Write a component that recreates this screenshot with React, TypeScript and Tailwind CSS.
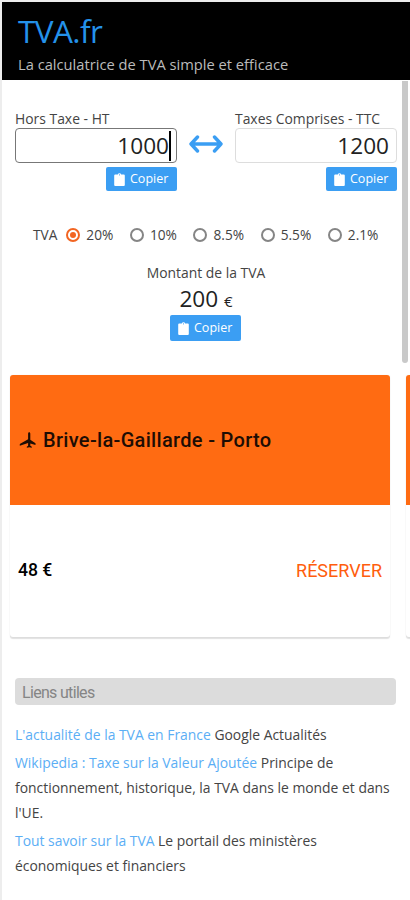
import React from 'react'

type LinkItem = {
  label: string
  description: string
}

const rates = ['20%', '10%', '8.5%', '5.5%', '2.1%']

const links: LinkItem[] = [
  { label: "L'actualité de la TVA en France", description: 'Google Actualités' },
  {
    label: 'Wikipedia : Taxe sur la Valeur Ajoutée',
    description: "Principe de fonctionnement, historique, la TVA dans le monde et dans l'UE.",
  },
  {
    label: 'Tout savoir sur la TVA',
    description: 'Le portail des ministères économiques et financiers',
  },
]

const CopyButton: React.FC<{ className?: string }> = ({ className = '' }) => (
  <button
    className={`flex w-[71px] items-center rounded-[2px] bg-[#3b9ef3] pl-2 text-[12.5px] text-white ${className}`}
  >
    <svg width="11" height="13" viewBox="0 0 11 13" fill="currentColor" className="mr-[5px] shrink-0">
      <path
        fillRule="evenodd"
        d="M1.2 1.5H3.8A1.75 1.75 0 0 1 7.2 1.5H9.8A1 1 0 0 1 10.8 2.5V12A1 1 0 0 1 9.8 13H1.2A1 1 0 0 1 .2 12V2.5A1 1 0 0 1 1.2 1.5ZM5.5 1.2A.6.6 0 1 0 5.5 2.4A.6.6 0 1 0 5.5 1.2Z"
      />
    </svg>
    Copier
  </button>
)

const SwapIcon = () => (
  <svg
    width="34"
    height="18"
    viewBox="0 0 34 18"
    fill="none"
    stroke="#3b9ef3"
    strokeWidth="3.4"
    strokeLinecap="round"
    strokeLinejoin="round"
  >
    <path d="M2 9H32M8.500 2L2 9l6.500 7M25.500 2L32 9l-6.500 7" />
  </svg>
)

const PlaneIcon = () => (
  <svg width="18" height="18" viewBox="0 0 18 18" fill="currentColor">
    <path d="M10.200 1.300c.7 0 1.100.7 1.100 1.500v6l5.200 3.500v1.800l-5.200-1.600v2.200l1.500 1v1.100l-2.500-.6-2.500.6v-1.100l1.300-1v-2.800l-8.300 2.800v-1.700l8.300-4.700V2.800c0-.8.400-1.500 1.100-1.500Z" />
  </svg>
)

const AmountField: React.FC<{ label: string; value: string; focused?: boolean }> = ({
  label,
  value,
  focused,
}) => (
  <div className="flex w-[162px] flex-col">
    <span className="h-[18px] text-[13.9px] leading-[18px] whitespace-nowrap">{label}</span>
    <div
      className={`flex h-[35px] items-center justify-end rounded-[4px] border text-[22.6px] text-[#222] ${
        focused ? 'border-[#777] pr-[5px]' : 'border-[#ddd] pr-[7px]'
      }`}
    >
      {value}
      {focused && <span className="h-[30px] w-[2px] bg-black" />}
    </div>
    <CopyButton className="mt-[4px] h-[24px] self-end" />
  </div>
)

const App = () => {
  return (
    <div className="relative h-[900px] w-[410px] overflow-hidden border-t-2 border-l-2 border-[#ededed] bg-white font-['Open_Sans',sans-serif] text-[#444]">
      <header className="h-[78px] bg-black pt-[11px] pl-4">
        <h1 className="text-[31.5px] leading-[36px] tracking-[-0.6px] text-[#2492ea]">TVA.fr</h1>
        <p className="mt-1 text-[14.7px] leading-[22px] text-[#bbb]">
          La calculatrice de TVA simple et efficace
        </p>
      </header>

      <main>
        <section className="flex pt-[30px] pl-[13px]">
          <AmountField label="Hors Taxe - HT" value="1000" focused />
          <div className="flex w-[58px] justify-center pt-[25px]">
            <SwapIcon />
          </div>
          <AmountField label="Taxes Comprises - TTC" value="1200" />
        </section>

        <section className="mt-[34px] flex h-5 items-center pl-[31px] text-[13.7px]">
          <span className="mr-[9px]">TVA</span>
          {rates.map((rate, index) => (
            <label key={rate} className="mr-[16.6px] flex items-center">
              <span
                className={`mr-[6px] flex size-[14px] items-center justify-center rounded-full border-2 ${
                  index === 0 ? 'border-[#f26522]' : 'border-[#858585]'
                }`}
              >
                {index === 0 && <span className="size-[6px] rounded-full bg-[#f26522]" />}
              </span>
              {rate}
            </label>
          ))}
        </section>

        <section className="mt-[18px] flex flex-col items-center">
          <span className="text-[13.9px] leading-5">Montant de la TVA</span>
          <div className="mt-[1px] h-[30px] text-[22.6px] leading-[30px] text-[#222]">
            200 <span className="text-[15px]">€</span>
          </div>
          <CopyButton className="mt-[1px] mr-px h-[26px]" />
        </section>

        <section className="mt-[34px] flex gap-[16px] pl-2 font-[Roboto,sans-serif]">
          <article className="h-[262px] w-[380px] shrink-0 overflow-hidden rounded-[3px] bg-white shadow-[0_2px_1px_rgba(0,0,0,0.12),0_0_2px_rgba(0,0,0,0.06)]">
            <div className="flex h-[130px] items-center gap-[6px] bg-[#ff6b12] pl-[9px] text-[20px] font-medium tracking-[0.32px] text-[#1d0d04]">
              <PlaneIcon />
              Brive-la-Gaillarde - Porto
            </div>
            <div className="flex h-[132px] items-center justify-between px-2 pb-[2px]">
              <span className="text-[17.6px] font-medium text-black">48 €</span>
              <span className="text-[18px] text-[#ff5d0d]">RÉSERVER</span>
            </div>
          </article>
          <article className="h-[262px] w-[380px] shrink-0 overflow-hidden rounded-[3px] bg-white shadow-[0_2px_1px_rgba(0,0,0,0.12),0_0_2px_rgba(0,0,0,0.06)]">
            <div className="h-[130px] bg-[#ff6b12]" />
          </article>
        </section>

        <section className="mt-[41px] pr-[14px] pl-[13px]">
          <h2 className="h-[27px] rounded-[4px] bg-[#dcdcdc] pl-[7px] font-[Roboto,sans-serif] text-[16px] leading-[29px] tracking-[-0.68px] text-[#858585]">
            Liens utiles
          </h2>
          <ul className="mt-[17px] flex flex-col gap-[3px] text-[13.9px] leading-[25px]">
            {links.map((link) => (
              <li key={link.label}>
                <a className="text-[#5baef5]">{link.label}</a> {link.description}
              </li>
            ))}
          </ul>
        </section>
      </main>

      <div className="absolute top-[79px] right-[2px] h-[282px] w-[6px] rounded-b-[3px] bg-[#c9c9c9]" />
    </div>
  )
}

export default App
